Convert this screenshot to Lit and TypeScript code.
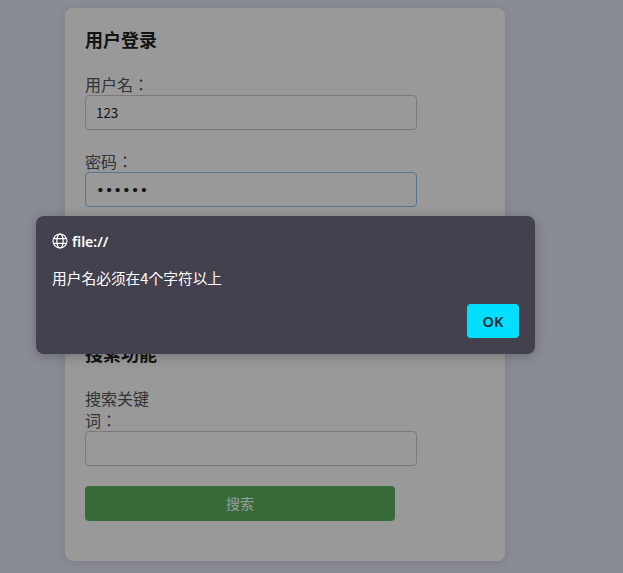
import { css, html, LitElement } from "lit";
import { customElement } from "lit/decorators.js";

@customElement("app-root")
export class AppRoot extends LitElement {
  static styles = css`
    :host {
      display: block;
      position: relative;
      height: 573px;
      overflow: hidden;
      background: #e5e9f8;
      font-family: "Noto Sans CJK KR", sans-serif;
      color: #333;
    }

    .page {
      display: flex;
      padding: 8px 0 0 65px;
    }

    .card {
      display: flex;
      flex-direction: column;
      gap: 80px;
      box-sizing: border-box;
      width: 440px;
      height: 553px;
      padding: 20px;
      background: #fff;
      border-radius: 8px;
      box-shadow: 0 2px 10px rgba(0, 0, 0, 0.1);
    }

    h2 {
      margin: 0 0 22px;
      font-size: 18px;
      line-height: 23px;
      font-weight: 700;
      color: #222;
    }

    .field {
      margin-bottom: 20px;
    }

    label {
      display: block;
      width: 80px;
      font-size: 16px;
      line-height: 22px;
      color: #555;
    }

    input {
      display: block;
      box-sizing: border-box;
      width: 332px;
      height: 35px;
      padding: 0 10px;
      border: 1px solid #ccc;
      border-radius: 4px;
      outline: none;
      background: #fff;
      font: 13.33px "Noto Sans CJK SC", sans-serif;
      color: #222;
    }

    input[type="password"] {
      font-family: "DejaVu Sans", sans-serif;
      font-size: 14.72px;
    }

    input.focused {
      border-color: #87c3f5;
    }

    .submit {
      display: block;
      width: 310px;
      height: 35px;
      padding: 0 0 2px;
      border: 0;
      border-radius: 4px;
      background: #5db561;
      color: #fff;
      font: 14px "Noto Sans CJK SC", sans-serif;
    }

    .overlay {
      position: absolute;
      inset: 0;
      background: rgba(0, 0, 0, 0.4);
    }

    .dialog {
      position: absolute;
      top: 216px;
      left: 36px;
      box-sizing: border-box;
      width: 499px;
      height: 138px;
      padding: 16px;
      background: #44414f;
      border-radius: 8px;
      box-shadow: 0 2px 12px rgba(0, 0, 0, 0.25);
      color: #fff;
      display: flex;
      flex-direction: column;
    }

    .origin {
      display: flex;
      align-items: center;
      gap: 4px;
      height: 18px;
      font-family: "Noto Sans", sans-serif;
      font-size: 14px;
      font-weight: 600;
    }

    .origin svg {
      display: block;
      width: 16px;
      height: 16px;
    }

    .message {
      margin-top: 18px;
      font-size: 14.72px;
      line-height: 20px;
    }

    .actions {
      display: flex;
      justify-content: flex-end;
      margin-top: auto;
    }

    .ok {
      width: 52px;
      height: 34px;
      padding: 0;
      border: 0;
      border-radius: 4px;
      background: #00dfff;
      color: #1c2a38;
      font: 600 14.5px "Noto Sans", sans-serif;
    }
  `;

  render() {
    return html`
      <div class="page">
        <div class="card">
          <section>
            <h2>用户登录</h2>
            <div class="field">
              <label>用户名：</label>
              <input type="text" .value=${"123"} />
            </div>
            <div class="field">
              <label>密码：</label>
              <input class="focused" type="password" .value=${"123456"} />
            </div>
            <button class="submit">登录</button>
          </section>
          <section>
            <h2>搜索功能</h2>
            <div class="field">
              <label>搜索关键词：</label>
              <input type="text" />
            </div>
            <button class="submit">搜索</button>
          </section>
        </div>
      </div>
      <div class="overlay"></div>
      <div class="dialog">
        <div class="origin">
          <svg viewBox="0 0 16 16" fill="none" stroke="currentColor" stroke-width="1.2">
            <circle cx="8" cy="8" r="7"></circle>
            <ellipse cx="8" cy="8" rx="3.2" ry="7"></ellipse>
            <path d="M1.5 5.7h13M1.5 10.3h13"></path>
          </svg>
          <span>file://</span>
        </div>
        <div class="message">用户名必须在4个字符以上</div>
        <div class="actions"><button class="ok">OK</button></div>
      </div>
    `;
  }
}
